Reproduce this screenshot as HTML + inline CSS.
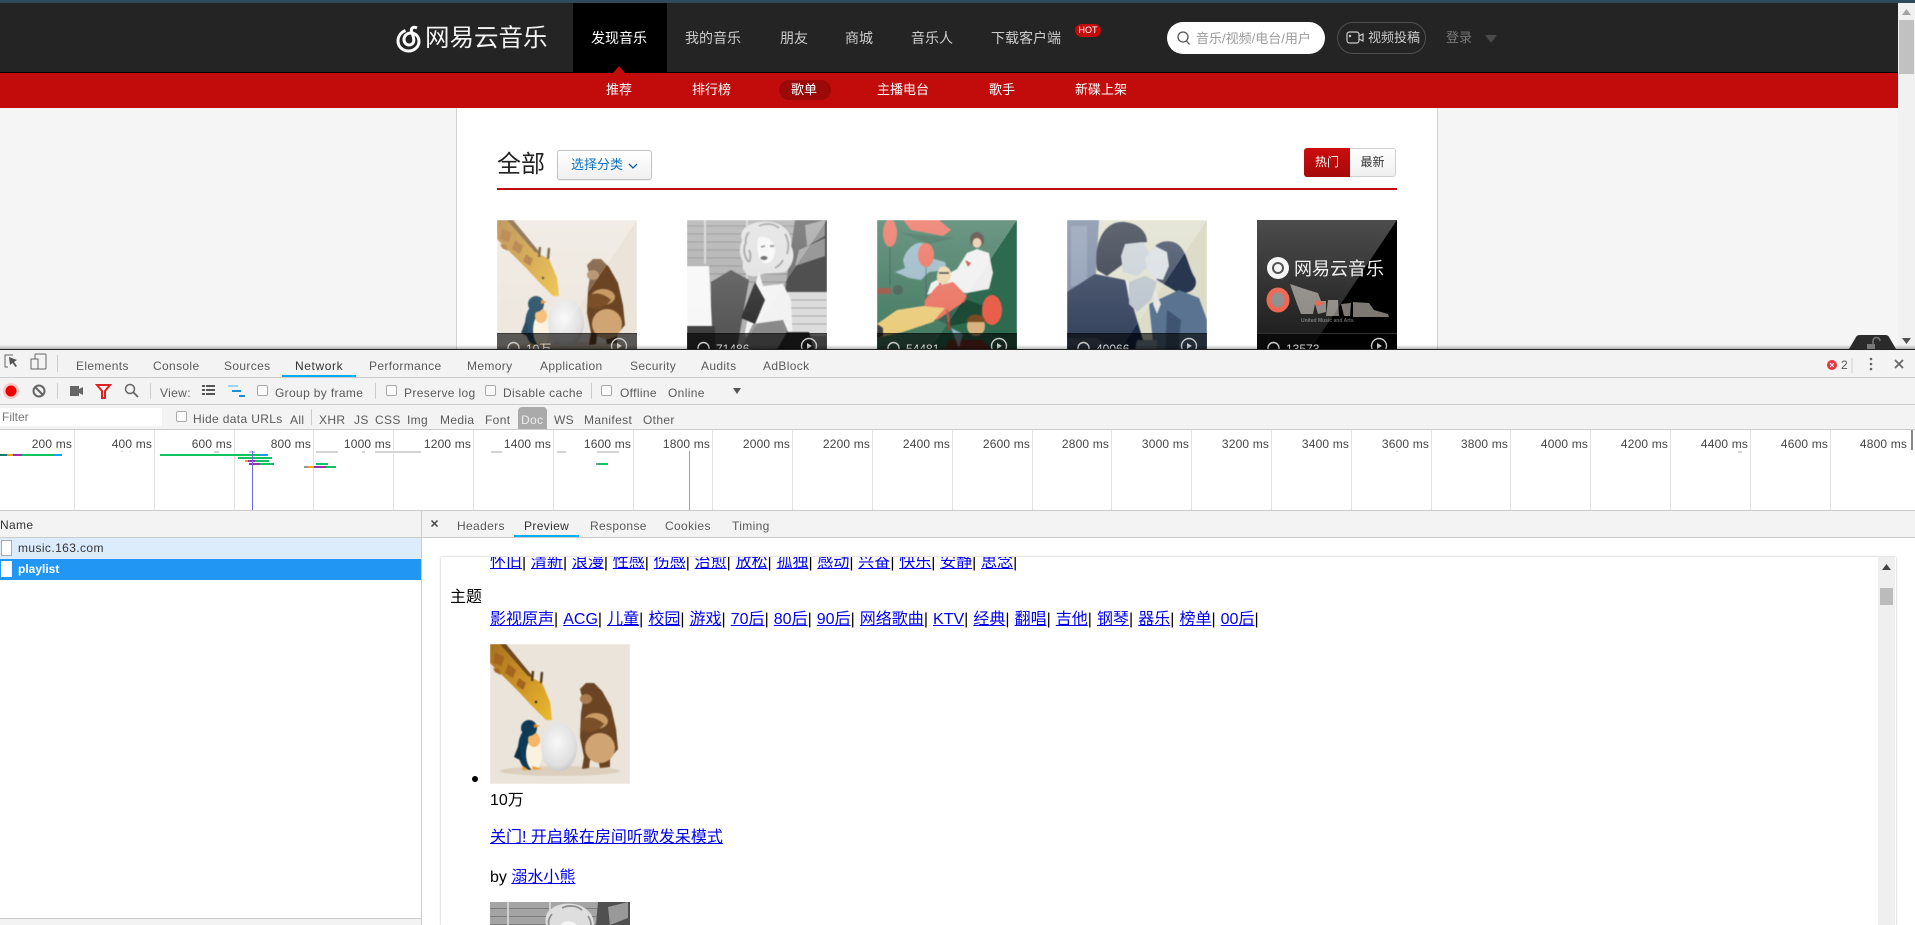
<!DOCTYPE html>
<html lang="zh"><head><meta charset="utf-8"><title>网易云音乐</title>
<style>
html,body{margin:0;padding:0;width:1915px;height:925px;overflow:hidden;background:#fff;font-family:"Liberation Sans","Noto Sans CJK SC",sans-serif}
div,span,a,svg{box-sizing:border-box}
.t{position:absolute;white-space:nowrap;line-height:20px;font-size:12px}
.n{color:#ccc;font-size:14px}
.s{color:#fff;font-size:13px}
.d{color:#5a5a5a;letter-spacing:.35px}
.b{position:absolute;background:#ccc}
.c{position:absolute;width:11px;height:11px;border:1px solid #aaa;border-radius:2px;background:#fbfbfb}
.l{position:absolute;text-align:right;width:78px;font-size:12px;line-height:16px;color:#444;top:436px;white-space:nowrap;letter-spacing:.15px}
.cv{position:absolute;top:220px;width:140px;height:129px;overflow:hidden}
.cv svg{position:absolute;left:0;top:0}
.ct{position:absolute;left:29px;top:121px;line-height:16px;font-size:12px;color:#ddd}
.im{filter:blur(.5px)}
#pv{position:absolute;left:441px;top:557px;width:1455px;height:368px;overflow:hidden;background:#fff;box-shadow:0 0 2px rgba(0,0,0,.3)}
#pv a{color:#00e;text-decoration:underline}
#pv .p{position:absolute;white-space:nowrap;font-size:16px;line-height:22px;color:#000}
</style></head><body>

<svg width="0" height="0" style="position:absolute">
<defs>
<linearGradient id="gl" x1="0" y1="0" x2="0" y2="1"><stop offset="0" stop-color="#fff" stop-opacity=".3"/><stop offset="1" stop-color="#fff" stop-opacity=".1"/></linearGradient>
<linearGradient id="nk" x1="0" y1="0" x2="1" y2="1"><stop offset="0" stop-color="#a8701f"/><stop offset=".6" stop-color="#d29a28"/><stop offset="1" stop-color="#ecbc2e"/></linearGradient>
<radialGradient id="egg" cx=".45" cy=".4" r=".7"><stop offset="0" stop-color="#f8f8f8"/><stop offset=".7" stop-color="#dfdfe0"/><stop offset="1" stop-color="#b9b7b5"/></radialGradient>
<symbol id="gir" viewBox="0 0 140 140">
<rect width="140" height="140" fill="#ebe4da"/>
<ellipse cx="70" cy="127" rx="60" ry="5" fill="#dccfbd"/>
<path d="M0 0H12L44 35 52 39 60 58 62 76 56 76 42 62 30 49 0 19Z" fill="url(#nk)"/>
<path d="M10 0H16L44 34 38 32Z" fill="#6d4a22"/>
<path d="M5 8l9 5-2 9-9-3zM18 20l8 6-3 8-8-5zM29 34l7 5-3 7-7-5zM3 24l6 1 2 6-6-3z" fill="#a5641d"/>
<path d="M42 37l1-10M51 39l1-11" stroke="#5c4020" stroke-width="2.500"/>
<circle cx="46" cy="58" r="1.200" fill="#222"/>
<ellipse cx="39" cy="105" rx="11" ry="21" fill="#0f3a55"/>
<ellipse cx="44" cy="110" rx="8" ry="16" fill="#fbf1df"/>
<ellipse cx="44" cy="96" rx="6" ry="7" fill="#f4b667"/>
<path d="M29 100l-5 13 8 4z" fill="#0c3049"/>
<circle cx="39" cy="84" r="8" fill="#0f3a55"/>
<path d="M44 80l6 2-6 2z" fill="#e88a24"/>
<path d="M33 122l6 4h-7zM42 122l10 3-9 1z" fill="#eb9c2e"/>
<ellipse cx="69" cy="103" rx="18" ry="24" fill="url(#egg)"/>
<path d="M92 125l2-12-4-20 1-24 2-12-3-12 6-6 8 0 8 8 9 16 5 22 2 20-5 6-3 0 0 12-10 1-2-9-8 1-1 8z" fill="#6b4523"/>
<ellipse cx="96" cy="55" rx="6" ry="5" fill="#a97d50"/>
<ellipse cx="110" cy="104" rx="15" ry="15" fill="#d0a573"/>
<ellipse cx="106" cy="77" rx="12" ry="8" fill="#c89a66"/>
<path d="M92 76c8-6 18 0 22 4-6 8-16 10-24 6z" fill="#7b4f28"/>
</symbol>
<symbol id="wom" viewBox="0 0 140 140">
<rect width="140" height="140" fill="#a4a4a4"/>
<g stroke="#7c7c7c" stroke-width="1"><path d="M0 6H140M0 14H140M0 22H140M0 30H140M0 38H140M0 46H140M0 54H140M0 62H140"/></g>
<path d="M18 0v44M60 0v60" stroke="#d0d0d0" stroke-width="2"/>
<path d="M108 0H140V72H98Z" fill="#505050"/>
<path d="M118 5l20-5v16l-18 10zM112 30l26-12v18l-30 10z" fill="#999"/>
<rect x="98" y="72" width="42" height="44" fill="#dcdcdc"/>
<g stroke="#aaa"><path d="M98 80H140M98 88H140M98 96H140M98 104H140"/></g>
<path d="M24 62l20-12 18 10-14 80H24z" fill="#3e3e3e"/>
<path d="M0 46h22l3 60H0z" fill="#f6f6f6"/>
<rect y="106" width="28" height="34" fill="#242424"/>
<path d="M55 20C50 6 70 0 84 2c14 2 22 12 20 24 6 10 0 22-6 26-8 2-20 0-28 4-10 2-16-6-14-14-4-8-4-14-1-22z" fill="#dedede"/>
<path d="M58 24c-2 8 0 14 4 18M62 12c-3 4-4 8-3 12M98 14c4 6 4 14 2 20M96 40c-2 4-4 6-8 8M72 6c6-3 14-3 20 2M62 30c2 4 2 8 0 12" fill="none" stroke="#8f8f8f" stroke-width="1.800"/>
<path d="M71 18c7-4 18 3 17 14-1 9-7 13-11 11-6-3-8-14-6-25z" fill="#f6f6f6"/>
<ellipse cx="77" cy="38" rx="3.500" ry="2" fill="#444"/>
<path d="M74 27l4-1M83 26l4 0" stroke="#555" stroke-width="1.400"/>
<path d="M72 52l4 14 20-2 8 16 2 50-44 10-4-28 8-40z" fill="#f2f2f2"/>
<path d="M68 62l-14 36 14 6 10-24z" fill="#111"/>
<path d="M66 104l30-4 6 14-10 26H48z" fill="#8a8a8a"/>
<path d="M100 112l22 0 8 28H84z" fill="#333"/>
</symbol>
<symbol id="grn" viewBox="0 0 140 140">
<rect width="140" height="140" fill="#2d6a4f"/>
<path d="M26 0l8 10 32 6 8-6-12-10z" fill="#e8604c"/>
<path d="M22 12l30 12 26-6-40-4z" fill="#245a42"/>
<ellipse cx="13" cy="13" rx="7" ry="14" fill="#e8604c"/><path d="M13 27v38" stroke="#123" stroke-width=".6"/>
<path d="M26 40c4-14 16-20 22-16l6 14 14 4 2 8-18 2-8 8-12-2-14-6 10-4z" fill="#8fb0c0"/>
<ellipse cx="49" cy="35" rx="8" ry="12" fill="#e8604c"/><path d="M49 47v60" stroke="#234" stroke-width=".6"/>
<ellipse cx="100" cy="20" rx="7" ry="8" fill="#3c2a20"/><ellipse cx="100" cy="23" rx="4.500" ry="5" fill="#e6c4a0"/>
<path d="M90 33l10-4 12 4 4 20-4 16-22 4-30-2-10 4 4-12 26-14z" fill="#eee"/>
<path d="M88 40l6 3-3 4zM62 60l4 3-4 3z" fill="#c0392b"/>
<path d="M62 48c6-4 12 0 12 6s-4 10-8 10-7-4-6-9z" fill="#e8d2a0"/>
<path d="M62 53h10" stroke="#222" stroke-width="1.500"/>
<path d="M60 66l16-4 14 14-8 18-20 6-16-2 2-18z" fill="#e8604c"/>
<path d="M0 104l20-14 26-4 22 2-12 14-30 10-26 6z" fill="#e8c56a"/>
<path d="M0 104l6 4v8l-6 2z" fill="#222"/>
<path d="M60 100l30-20 18 6-6 14-28 6z" fill="#1c4a36"/>
<ellipse cx="115" cy="90" rx="10" ry="15" fill="#e8604c"/>
<circle cx="21" cy="70" r="5" fill="#2a4a3c"/>
<path d="M0 68h14v6H0z" fill="#8a3a2a"/>
<path d="M72 120l34 0 16 20H64z" fill="#7d3026"/>
<ellipse cx="99" cy="106" rx="9" ry="10" fill="#d8b27e"/><path d="M90 102c0-10 18-10 18 0z" fill="#7a4a22"/>
<path d="M74 108l12 6-4 14z" fill="#8fb0c0"/>
<path d="M70 90l2 12M72 102v8" stroke="#c0392b" stroke-width="2"/>
</symbol>
<symbol id="cpl" viewBox="0 0 140 140">
<rect width="140" height="140" fill="#dcdcc8"/>
<path d="M0 0H32L28 70 0 90Z" fill="#6d7d99"/>
<path d="M4 6h16v60H4z" fill="#8a9ab2" opacity=".7"/>
<path d="M0 140V72l28-18 30 6 24 80z" fill="#1c2b49"/>
<path d="M30 50C26 18 40 0 58 2c16 2 22 12 22 20L62 24 56 44 40 56z" fill="#1d2635"/>
<path d="M58 24l18-2 8 14-4 12-10 8-14-4-2-16z" fill="#c4ccd2"/>
<path d="M58 58l8 8 6 10-10 4z" fill="#e0e4e4"/>
<path d="M82 44c-2-14 10-26 24-22 14 4 14 24 22 36 4 10-6 18-18 14L90 60z" fill="#293650"/>
<path d="M78 38l10-12 12 6 2 14-6 14-10-2-6-10z" fill="#d5dbe0"/>
<path d="M62 62l16-6 12 6-6 18-14 12-8-8z" fill="#b2bdc7"/>
<path d="M82 84l30-14 20 8 8 22v40H88z" fill="#5a7390"/>
<path d="M88 70l6 14-4 10-4-10z" fill="#e4e6e2"/>
<path d="M100 90l14 10-4 40-12 0z" fill="#3f5470"/>
<path d="M0 118l30 0 30 22H0z" fill="#3b4a62"/>
<path d="M70 120l20 0 0 20-24 0z" fill="#8490a0"/>
</symbol>
</defs>
</svg>

<!-- PAGE -->
<div style="position:absolute;left:0;top:0;width:1915px;height:349px;overflow:hidden;background:#f5f5f5">
  <div style="position:absolute;left:0;top:0;width:1915px;height:3px;background:#2f4a5a"></div>
  <div style="position:absolute;left:0;top:3px;width:1898px;height:69px;background:#242424"></div>
  <div style="position:absolute;left:0;top:72px;width:1898px;height:1px;background:#000"></div>
  <div style="position:absolute;left:0;top:73px;width:1898px;height:35px;background:#c20c0c"></div>
  <div style="position:absolute;left:456px;top:108px;width:982px;height:241px;background:#fff;border-left:1px solid #d3d3d3;border-right:1px solid #d3d3d3"></div>

  <svg style="position:absolute;left:396px;top:24px" width="26" height="29" viewBox="0 0 26 29" fill="none" stroke="#fff">
    <path d="M9.500 6.500C4.500 8.500 2 12.500 2 17c0 5.500 4.500 10 10.500 10 6 0 10.500-4.500 10.500-9.500 0-5-3.500-8.500-8-8.500-4 0-7 2.800-7 6.500 0 3.300 2.400 5.500 5 5.500 2.700 0 4.800-2 4.800-4.800 0-3-1.500-6-2.300-9.200-.7-2.800 1.700-4.800 5.500-3" stroke-width="3"/>
  </svg>
  <span class="t" style="left:425px;top:26px;font-size:24.500px;line-height:26px;color:#f2f2f2">网易云音乐</span>

  <div style="position:absolute;left:573px;top:3px;width:94px;height:69px;background:#000"></div>
  <svg style="position:absolute;left:613px;top:66px" width="12" height="7"><path d="M0 7L6 0l6 7z" fill="#c20c0c"/></svg>
  <span class="t n" style="left:591px;top:28px;color:#fff">发现音乐</span>
  <span class="t n" style="left:685px;top:28px">我的音乐</span>
  <span class="t n" style="left:780px;top:28px">朋友</span>
  <span class="t n" style="left:845px;top:28px">商城</span>
  <span class="t n" style="left:911px;top:28px">音乐人</span>
  <span class="t n" style="left:991px;top:28px">下载客户端</span>
  <div style="position:absolute;left:1075px;top:24px;width:26px;height:13px;border-radius:7px;background:#c20c0c;color:#fff;font-size:9px;line-height:13px;text-align:center">HOT</div>

  <span class="t s" style="left:606px;top:80px">推荐</span>
  <span class="t s" style="left:692px;top:80px">排行榜</span>
  <div style="position:absolute;left:779px;top:80px;width:52px;height:20px;border-radius:10px;background:#9b0909"></div>
  <span class="t s" style="left:791px;top:80px">歌单</span>
  <span class="t s" style="left:877px;top:80px">主播电台</span>
  <span class="t s" style="left:989px;top:80px">歌手</span>
  <span class="t s" style="left:1075px;top:80px">新碟上架</span>

  <div style="position:absolute;left:1167px;top:22px;width:158px;height:32px;border-radius:16px;background:#fff"></div>
  <svg style="position:absolute;left:1176px;top:30px" width="16" height="16" fill="none" stroke="#555" stroke-width="1.300"><circle cx="7" cy="7" r="5"/><path d="M10.500 11l3 3.500"/></svg>
  <span class="t" style="left:1196px;top:29px;color:#9b9b9b;font-size:13px">音乐/视频/电台/用户</span>
  <div style="position:absolute;left:1337px;top:22px;width:89px;height:32px;border-radius:16px;border:1px solid #4f4f4f"></div>
  <svg style="position:absolute;left:1346px;top:30px" width="18" height="15" fill="none" stroke="#ccc" stroke-width="1.200"><rect x="1" y="2" width="12" height="11" rx="2.500"/><path d="M13 6l4-2v7l-4-2"/><circle cx="4" cy="6" r=".6"/></svg>
  <span class="t" style="left:1368px;top:28px;color:#ccc;font-size:13px">视频投稿</span>
  <span class="t" style="left:1446px;top:28px;color:#787878;font-size:13px">登录</span>
  <svg style="position:absolute;left:1485px;top:35px" width="12" height="8"><path d="M0 0h12l-6 8z" fill="#4a4a4a"/></svg>

  <span class="t" style="left:497px;top:150px;font-size:24px;line-height:30px;color:#222">全部</span>
  <div style="position:absolute;left:557px;top:150px;width:95px;height:30px;border:1px solid #c3c3c3;border-radius:3px;background:linear-gradient(#fff,#f0f0f0);box-shadow:0 1px 1px rgba(0,0,0,.08)"></div>
  <span class="t" style="left:571px;top:155px;color:#0c73c2;font-size:13px">选择分类</span>
  <svg style="position:absolute;left:628px;top:163px" width="10" height="7" fill="none" stroke="#0c5a9e" stroke-width="1.300"><path d="M1 1l4 4 4-4"/></svg>
  <div style="position:absolute;left:1304px;top:148px;width:46px;height:29px;border-radius:3px 0 0 3px;background:linear-gradient(#cc0d0d,#a50a0a);color:#fff;font-size:12px;line-height:29px;text-align:center">热门</div>
  <div style="position:absolute;left:1350px;top:148px;width:46px;height:29px;border:1px solid #d0d0d0;border-left:0;border-radius:0 3px 3px 0;background:linear-gradient(#fff,#efefef);color:#333;font-size:12px;line-height:27px;text-align:center">最新</div>
  <div style="position:absolute;left:497px;top:188px;width:900px;height:2px;background:#c20c0c"></div>

  <div class="cv" style="left:497px"><svg width="140" height="140"><use class="im" href="#gir" width="140" height="140"/><path d="M0 0H140L53 130H0Z" fill="url(#gl)"/></svg><svg width="140" height="130"><rect y="113" width="140" height="17" fill="#000" opacity=".62"/><rect y="113" width="140" height="1" fill="#000" opacity=".3"/><g fill="none" stroke="#ccc" stroke-width="1.400"><path d="M11 130v-2a5.500 5.500 0 0 1 11 0v2"/><circle cx="122" cy="126" r="7.500"/></g><path d="M120 123l5 3-5 3z" fill="#ccc"/></svg><span class="ct">10万</span></div>
  <div class="cv" style="left:687px"><svg width="140" height="140"><use class="im" href="#wom" width="140" height="140"/><path d="M0 0H140L53 130H0Z" fill="url(#gl)"/></svg><svg width="140" height="130"><rect y="113" width="140" height="17" fill="#000" opacity=".62"/><rect y="113" width="140" height="1" fill="#000" opacity=".3"/><g fill="none" stroke="#ccc" stroke-width="1.400"><path d="M11 130v-2a5.500 5.500 0 0 1 11 0v2"/><circle cx="122" cy="126" r="7.500"/></g><path d="M120 123l5 3-5 3z" fill="#ccc"/></svg><span class="ct">71486</span></div>
  <div class="cv" style="left:877px"><svg width="140" height="140"><use class="im" href="#grn" width="140" height="140"/><path d="M0 0H140L53 130H0Z" fill="url(#gl)"/></svg><svg width="140" height="130"><rect y="113" width="140" height="17" fill="#000" opacity=".62"/><rect y="113" width="140" height="1" fill="#000" opacity=".3"/><g fill="none" stroke="#ccc" stroke-width="1.400"><path d="M11 130v-2a5.500 5.500 0 0 1 11 0v2"/><circle cx="122" cy="126" r="7.500"/></g><path d="M120 123l5 3-5 3z" fill="#ccc"/></svg><span class="ct">54481</span></div>
  <div class="cv" style="left:1067px"><svg width="140" height="140"><use class="im" href="#cpl" width="140" height="140"/><path d="M0 0H140L53 130H0Z" fill="url(#gl)"/></svg><svg width="140" height="130"><rect y="113" width="140" height="17" fill="#000" opacity=".62"/><rect y="113" width="140" height="1" fill="#000" opacity=".3"/><g fill="none" stroke="#ccc" stroke-width="1.400"><path d="M11 130v-2a5.500 5.500 0 0 1 11 0v2"/><circle cx="122" cy="126" r="7.500"/></g><path d="M120 123l5 3-5 3z" fill="#ccc"/></svg><span class="ct">40066</span></div>
  <div class="cv" style="left:1257px"><svg width="140" height="130">
    <rect width="140" height="130" fill="#000"/>
    <circle cx="21" cy="48" r="11" fill="#f2f2f2"/><circle cx="21" cy="48" r="5" fill="none" stroke="#222" stroke-width="2"/>
    <text x="37" y="55" font-size="18" fill="#eee" font-family="'Liberation Sans','Noto Sans CJK SC',sans-serif">网易云音乐</text>
    <ellipse cx="21" cy="80" rx="9" ry="10" fill="#7a7a7a" stroke="#e8492f" stroke-width="5"/>
    <path d="M33 64l18 6v24H44l-4-10zM51 70l10 3 3 8 5 0 0 11-8 2-3-10-2 10h-5zM71 80h10l1 16H69zM84 84l3 12h6l1-13zM96 82l16 1 5 7 14 4 1 3H96z" fill="#7d7872"/>
    <path d="M58 80l10 3-8 4z" fill="#e8492f"/>
    <text x="44" y="102" font-size="5" fill="#666" font-weight="bold" font-family="'Liberation Sans',sans-serif">United Music and Arts</text>
    <path d="M0 0H140L53 130H0Z" fill="url(#gl)"/>
    <rect y="113" width="140" height="17" fill="#000" opacity=".62"/><rect y="113" width="140" height="1" fill="#333"/>
    <g fill="none" stroke="#ccc" stroke-width="1.400"><path d="M11 130v-2a5.500 5.500 0 0 1 11 0v2"/><circle cx="122" cy="126" r="7.500"/></g><path d="M120 123l5 3-5 3z" fill="#ccc"/></svg><span class="ct">13573</span></div>

  <!-- page scrollbar -->
  <div style="position:absolute;left:1898px;top:3px;width:17px;height:346px;background:#f1f1f1"></div>
  <div style="position:absolute;left:1899px;top:20px;width:15px;height:54px;background:#c1c1c1"></div>
  <svg style="position:absolute;left:1902px;top:9px" width="9" height="6"><path d="M4.500 0L9 6H0z" fill="#a3a3a3"/></svg>
  <svg style="position:absolute;left:1902px;top:338px" width="9" height="6"><path d="M0 0h9L4.500 6z" fill="#505050"/></svg>
  <!-- shadow -->
  <div style="position:absolute;left:0;top:345px;width:1915px;height:4px;background:linear-gradient(rgba(0,0,0,0),rgba(0,0,0,.28))"></div>
  <!-- lock tab -->
  <svg style="position:absolute;left:1849px;top:334px" width="49" height="15"><path d="M0 15L7 3Q8 1 11 1H36Q39 1 40 3L47 15z" fill="#2b2b2b"/><rect x="18" y="10" width="8" height="5" fill="#777"/><path d="M24 10V7a3.500 3.500 0 0 1 7 0" fill="none" stroke="#777" stroke-width="1.500"/></svg>
</div>

<!-- DEVTOOLS -->
<div style="position:absolute;left:0;top:349px;width:1915px;height:1px;background:#222"></div>
<div style="position:absolute;left:0;top:350px;width:1915px;height:575px;background:#f3f3f3"></div>

<svg style="position:absolute;left:0;top:350px" width="60" height="27" fill="none">
  <path d="M13 5H5v12h3" stroke="#666"/><path d="M9 7l8 3-3 2 3 4-1.500 1-3-4-2.500 2z" fill="#555"/>
  <rect x="35" y="4" width="11" height="15" rx="1" stroke="#666"/><rect x="31" y="9" width="7" height="10" fill="#f3f3f3" stroke="#666"/>
</svg>
<div class="b" style="left:57px;top:355px;width:1px;height:17px"></div>
<span class="t d" style="left:76px;top:356px">Elements</span>
<span class="t d" style="left:153px;top:356px">Console</span>
<span class="t d" style="left:224px;top:356px">Sources</span>
<span class="t d" style="left:295px;top:356px;color:#333;letter-spacing:.6px">Network</span>
<span class="t d" style="left:369px;top:356px">Performance</span>
<span class="t d" style="left:467px;top:356px">Memory</span>
<span class="t d" style="left:540px;top:356px">Application</span>
<span class="t d" style="left:630px;top:356px">Security</span>
<span class="t d" style="left:701px;top:356px">Audits</span>
<span class="t d" style="left:763px;top:356px">AdBlock</span>
<div style="position:absolute;left:282px;top:375px;width:74px;height:2px;background:#03a9f4"></div>
<div class="b" style="left:0;top:377px;width:1915px;height:1px"></div>

<svg style="position:absolute;left:1825px;top:355px" width="90" height="20">
  <circle cx="7" cy="10" r="5" fill="#e8303c"/><path d="M5 8l4 4M9 8l-4 4" stroke="#fff" stroke-width="1.200"/>
  <path d="M27 3v15" stroke="#ccc"/>
  <circle cx="46" cy="4" r="1.300" fill="#666"/><circle cx="46" cy="9" r="1.300" fill="#666"/><circle cx="46" cy="14" r="1.300" fill="#666"/>
  <path d="M70 5l8 8M78 5l-8 8" stroke="#666" stroke-width="1.800"/>
</svg>
<span class="t" style="left:1841px;top:355px;color:#555">2</span>

<!-- toolbar -->
<svg style="position:absolute;left:0;top:378px" width="250" height="26" fill="none">
  <circle cx="11" cy="13" r="8" fill="#f9c9c9"/><circle cx="11" cy="13" r="5.500" fill="#e00"/>
  <circle cx="39" cy="13" r="5.500" stroke="#666" stroke-width="2"/><path d="M35.500 9.500l7 7" stroke="#666" stroke-width="2"/>
  <path d="M70 8h9v10h-9zM79 11l4-2v8l-4-2z" fill="#666"/>
  <path d="M97 7h13l-5 6v7h-3v-7z" stroke="#d22" stroke-width="2"/>
  <circle cx="130" cy="11" r="4.500" stroke="#666" stroke-width="1.500"/><path d="M133 14l5 5" stroke="#666" stroke-width="1.800"/>
  <path d="M202 7h3v2h-3zM206 7h9v2h-9zM202 11h3v2h-3zM206 11h9v2h-9zM202 15h3v2h-3zM206 15h9v2h-9z" fill="#555"/>
  <path d="M228 7h10v2h-10z" fill="#9fd0f5"/><path d="M232 12h9v2h-9zM239 17h6v2h-6z" fill="#1a8ed8"/>
</svg>
<div class="b" style="left:57px;top:383px;width:1px;height:16px"></div>
<div class="b" style="left:150px;top:383px;width:1px;height:16px"></div>
<div class="b" style="left:375px;top:383px;width:1px;height:16px"></div>
<div class="b" style="left:591px;top:383px;width:1px;height:16px"></div>
<span class="t d" style="left:160px;top:383px">View:</span>
<div class="c" style="left:257px;top:385px"></div><span class="t d" style="left:275px;top:383px">Group by frame</span>
<div class="c" style="left:386px;top:385px"></div><span class="t d" style="left:404px;top:383px">Preserve log</span>
<div class="c" style="left:485px;top:385px"></div><span class="t d" style="left:503px;top:383px">Disable cache</span>
<div class="c" style="left:601px;top:385px"></div><span class="t d" style="left:620px;top:383px">Offline</span>
<span class="t d" style="left:668px;top:383px">Online</span>
<svg style="position:absolute;left:733px;top:388px" width="8" height="6"><path d="M0 0h8L4 6z" fill="#555"/></svg>
<div class="b" style="left:0;top:404px;width:1915px;height:1px"></div>

<!-- filter -->
<div style="position:absolute;left:0;top:408px;width:162px;height:18px;background:#fff"></div>
<span class="t" style="left:2px;top:407px;color:#777">Filter</span>
<div class="c" style="left:176px;top:411px"></div><span class="t d" style="left:193px;top:409px">Hide data URLs</span>
<span class="t d" style="left:290px;top:410px">All</span>
<div class="b" style="left:311px;top:409px;width:1px;height:16px"></div>
<span class="t d" style="left:319px;top:410px">XHR</span>
<span class="t d" style="left:354px;top:410px">JS</span>
<span class="t d" style="left:375px;top:410px">CSS</span>
<span class="t d" style="left:407px;top:410px">Img</span>
<span class="t d" style="left:440px;top:410px">Media</span>
<span class="t d" style="left:485px;top:410px">Font</span>
<div style="position:absolute;left:518px;top:407px;width:29px;height:22px;border-radius:4px 4px 0 0;background:#aaa"></div>
<span class="t" style="left:521px;top:410px;color:#eee;letter-spacing:.35px">Doc</span>
<span class="t d" style="left:554px;top:410px">WS</span>
<span class="t d" style="left:584px;top:410px">Manifest</span>
<span class="t d" style="left:643px;top:410px">Other</span>
<div class="b" style="left:0;top:429px;width:1915px;height:1px"></div>

<!-- overview -->
<div style="position:absolute;left:0;top:430px;width:1915px;height:80px;background:#fff"></div>
<svg style="position:absolute;left:0;top:430px" width="1915" height="80">
  <g stroke="#e2e2e2"><path d="M74.500 0V80M154.500 0V80M234.500 0V80M313.500 0V80M393.500 0V80M473.500 0V80M553.500 0V80M633.500 0V80M712.500 0V80M792.500 0V80M872.500 0V80M952.500 0V80M1032.500 0V80M1111.500 0V80M1191.500 0V80M1271.500 0V80M1351.500 0V80M1431.500 0V80M1510.500 0V80M1590.500 0V80M1670.500 0V80M1750.500 0V80M1830.500 0V80"/></g>
  <rect x="1911" y="0" width="2" height="20" fill="#888"/>
  <g fill="#d4d4d4"><rect x="121" y="21" width="2" height="1"/><rect x="130" y="21" width="1" height="1"/><rect x="214" y="21" width="5" height="2"/><rect x="316" y="21" width="22" height="2"/><rect x="362" y="21" width="3" height="2"/><rect x="375" y="21" width="46" height="2"/><rect x="491" y="21" width="11" height="2"/><rect x="557" y="21" width="9" height="2"/><rect x="597" y="21" width="22" height="2"/><rect x="1396" y="21" width="2" height="1"/><rect x="1738" y="21" width="4" height="2"/></g>
  <rect x="249" y="21" width="6" height="2" fill="#cbc6e8"/>
  <rect x="0" y="24" width="7" height="2" fill="#1a7a6e"/><rect x="7" y="24" width="6" height="2" fill="#f0a020"/><rect x="13" y="24" width="9" height="2" fill="#9b30b0"/><rect x="22" y="24" width="31" height="2" fill="#0ec45f"/><rect x="53" y="24" width="9" height="2" fill="#1a9ef0"/>
  <rect x="160" y="24" width="100" height="2" fill="#0ec45f"/><rect x="260" y="24" width="8" height="2" fill="#1a9ef0"/>
  <rect x="238" y="27" width="34" height="2" fill="#0ec45f"/>
  <rect x="245" y="30" width="3" height="2" fill="#f0a020"/><rect x="248" y="30" width="7" height="2" fill="#9b30b0"/><rect x="255" y="30" width="14" height="2" fill="#0ec45f"/>
  <rect x="249" y="33" width="11" height="2" fill="#9b30b0"/><rect x="260" y="33" width="14" height="2" fill="#0ec45f"/>
  <rect x="316" y="33" width="12" height="2" fill="#0ec45f"/>
  <rect x="304" y="36" width="4" height="2" fill="#999"/><rect x="308" y="36" width="6" height="2" fill="#f0a020"/><rect x="314" y="36" width="12" height="2" fill="#9b30b0"/><rect x="326" y="36" width="10" height="2" fill="#0ec45f"/>
  <rect x="596" y="33" width="2" height="2" fill="#999"/><rect x="598" y="33" width="10" height="2" fill="#0ec45f"/>
  <rect x="252" y="21" width="1" height="59" fill="#6a6ae8"/>
  <rect x="689" y="21" width="1" height="59" fill="#f08080"/>
</svg>
<span class="l" style="left:-6px">200 ms</span><span class="l" style="left:74px">400 ms</span><span class="l" style="left:154px">600 ms</span><span class="l" style="left:233px">800 ms</span><span class="l" style="left:313px">1000 ms</span><span class="l" style="left:393px">1200 ms</span><span class="l" style="left:473px">1400 ms</span><span class="l" style="left:553px">1600 ms</span><span class="l" style="left:632px">1800 ms</span><span class="l" style="left:712px">2000 ms</span><span class="l" style="left:792px">2200 ms</span><span class="l" style="left:872px">2400 ms</span><span class="l" style="left:952px">2600 ms</span><span class="l" style="left:1031px">2800 ms</span><span class="l" style="left:1111px">3000 ms</span><span class="l" style="left:1191px">3200 ms</span><span class="l" style="left:1271px">3400 ms</span><span class="l" style="left:1351px">3600 ms</span><span class="l" style="left:1430px">3800 ms</span><span class="l" style="left:1510px">4000 ms</span><span class="l" style="left:1590px">4200 ms</span><span class="l" style="left:1670px">4400 ms</span><span class="l" style="left:1750px">4600 ms</span><span class="l" style="left:1829px">4800 ms</span>
<div class="b" style="left:0;top:510px;width:1915px;height:1px"></div>

<!-- lower split -->
<span class="t d" style="left:0;top:515px;color:#333">Name</span>
<div class="b" style="left:0;top:537px;width:1915px;height:1px"></div>
<div style="position:absolute;left:0;top:538px;width:421px;height:387px;background:#fff"></div>
<div style="position:absolute;left:0;top:538px;width:421px;height:21px;background:#dcecfd"></div>
<div style="position:absolute;left:0;top:559px;width:421px;height:21px;background:#2196f3"></div>
<svg style="position:absolute;left:1px;top:540px" width="12" height="40" fill="#fff" stroke="#aaa"><rect x=".5" y=".5" width="10" height="15"/><rect x=".5" y="21.500" width="10" height="15" stroke="#fff"/></svg>
<span class="t" style="left:18px;top:538px;color:#333;letter-spacing:.4px">music.163.com</span>
<span class="t" style="left:18px;top:559px;color:#fff;font-weight:bold">playlist</span>
<div style="position:absolute;left:0;top:918px;width:421px;height:7px;background:#f3f3f3;border-top:1px solid #ccc"></div>
<div class="b" style="left:421px;top:511px;width:1px;height:414px"></div>

<div style="position:absolute;left:422px;top:538px;width:1493px;height:387px;background:#fff"></div>
<svg style="position:absolute;left:430px;top:519px" width="10" height="10"><path d="M1.500 1.500l6 6M7.500 1.500l-6 6" stroke="#444" stroke-width="1.500"/></svg>
<span class="t d" style="left:457px;top:516px">Headers</span>
<span class="t d" style="left:524px;top:516px;color:#333">Preview</span>
<span class="t d" style="left:590px;top:516px">Response</span>
<span class="t d" style="left:665px;top:516px">Cookies</span>
<span class="t d" style="left:732px;top:516px">Timing</span>
<div style="position:absolute;left:514px;top:535px;width:65px;height:2px;background:#03a9f4"></div>

<div id="pv">
  <div class="p" style="left:49px;top:0;height:15px;overflow:hidden;word-spacing:.3px"><div style="margin-top:-5px"><a>怀旧</a>| <a>清新</a>| <a>浪漫</a>| <a>性感</a>| <a>伤感</a>| <a>治愈</a>| <a>放松</a>| <a>孤独</a>| <a>感动</a>| <a>兴奋</a>| <a>快乐</a>| <a>安静</a>| <a>思念</a>|</div></div>
  <div class="p" style="left:9px;top:30px">主题</div>
  <div class="p" style="left:49px;top:52px;word-spacing:.6px"><a>影视原声</a>| <a>ACG</a>| <a>儿童</a>| <a>校园</a>| <a>游戏</a>| <a>70后</a>| <a>80后</a>| <a>90后</a>| <a>网络歌曲</a>| <a>KTV</a>| <a>经典</a>| <a>翻唱</a>| <a>吉他</a>| <a>钢琴</a>| <a>器乐</a>| <a>榜单</a>| <a>00后</a>|</div>
  <svg style="position:absolute;left:49px;top:87px" width="140" height="140"><use class="im" href="#gir" width="140" height="140"/></svg>
  <div style="position:absolute;left:31px;top:219px;width:6px;height:6px;border-radius:50%;background:#000"></div>
  <div class="p" style="left:49px;top:233px">10万</div>
  <div class="p" style="left:49px;top:270px"><a>关门! 开启躲在房间听歌发呆模式</a></div>
  <div class="p" style="left:49px;top:310px">by <a>溺水小熊</a></div>
  <svg style="position:absolute;left:49px;top:345px" width="140" height="23" viewBox="0 0 140 23">
    <rect width="140" height="23" fill="#a4a4a4"/>
    <path d="M0 6.500H140M0 14.500H140M0 22.500H140" stroke="#7c7c7c"/>
    <path d="M18 0v23M60 0v23" stroke="#d0d0d0" stroke-width="2"/>
    <path d="M108 0H140V23H106Z" fill="#505050"/>
    <path d="M118 5l20-5v16l-18 7z" fill="#999"/>
    <path d="M56 23C52 6 70 0 84 2c12 2 20 10 20 21z" fill="#dedede"/>
    <path d="M71 23c1-4 10-6 16 0z" fill="#f6f6f6"/>
    <path d="M62 12c-3 4-4 8-3 11M72 6c6-3 14-3 20 2M98 14c2 3 3 6 3 9" fill="none" stroke="#8f8f8f" stroke-width="1.800"/>
  </svg>
  <div style="position:absolute;left:1437px;top:0;width:17px;height:368px;background:#efefef"></div>
  <svg style="position:absolute;left:1441px;top:7px" width="9" height="6"><path d="M4.500 0L9 6H0z" fill="#444"/></svg>
  <div style="position:absolute;left:1439px;top:31px;width:13px;height:17px;background:#bbb"></div>
</div>
</body></html>
